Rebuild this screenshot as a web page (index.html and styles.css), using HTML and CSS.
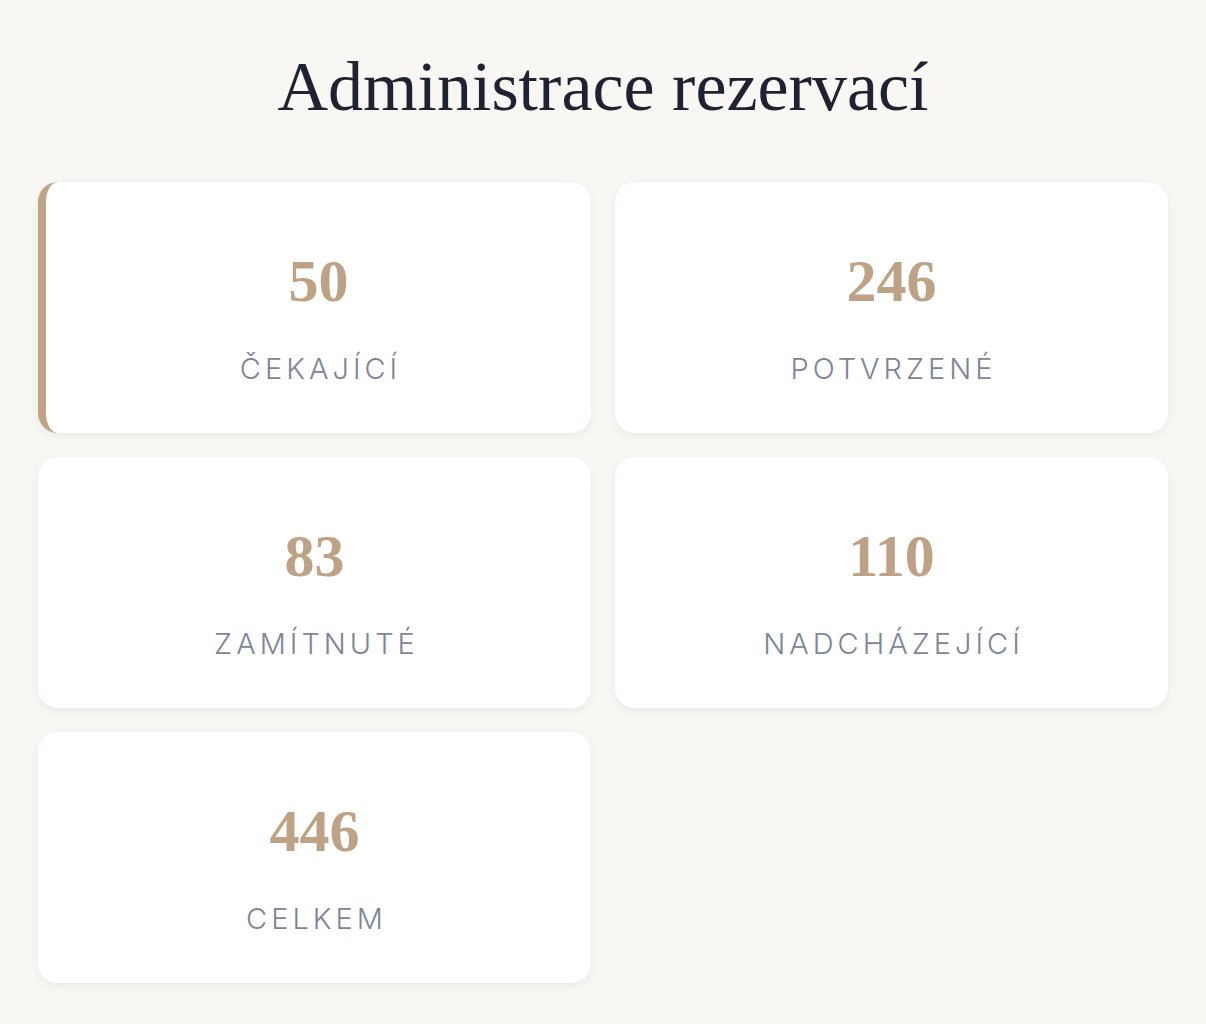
FILE: index.html
```html
<!DOCTYPE html>
<html lang="cs">
<head>
<meta charset="utf-8">
<title>Administrace rezervací</title>
<link rel="stylesheet" href="styles.css">
</head>
<body>
<main class="page">
  <h1 class="title">Administrace rezervací</h1>
  <div class="grid">
    <div class="card card-active"><div class="num">50</div><div class="label">Čekající</div></div>
    <div class="card"><div class="num">246</div><div class="label">Potvrzené</div></div>
    <div class="card"><div class="num">83</div><div class="label">Zamítnuté</div></div>
    <div class="card"><div class="num">110</div><div class="label">Nadcházející</div></div>
    <div class="card"><div class="num">446</div><div class="label">Celkem</div></div>
  </div>
</main>
</body>
</html>
```
FILE: styles.css
```css
html, body {
  margin: 0;
  padding: 0;
  background: #f8f7f4;
}
.page {
  padding: 49px 38px 40px;
}
.title {
  margin: 0 0 57px;
  text-align: center;
  font-family: "Liberation Serif", serif;
  font-weight: 400;
  font-size: 70px;
  line-height: 76px;
  color: #1f2230;
}
.grid {
  display: grid;
  grid-template-columns: 1fr 1fr;
  gap: 24px;
}
.card {
  height: 251px;
  box-sizing: border-box;
  background: #ffffff;
  border-radius: 20px;
  box-shadow: 0 3px 10px rgba(60, 50, 30, 0.07);
  display: flex;
  flex-direction: column;
  align-items: center;
  justify-content: center;
  gap: 42px;
  padding-top: 21px;
}
.card-active {
  border-left: 8px solid #bfa385;
}
.num {
  font-family: "Liberation Serif", serif;
  font-weight: 700;
  font-size: 60px;
  line-height: 60px;
  color: #bda285;
}
.label {
  font-family: "Inter", "Noto Sans", sans-serif;
  font-weight: 300;
  font-size: 29px;
  line-height: 32px;
  letter-spacing: 4px;
  text-indent: 4px;
  text-transform: uppercase;
  color: #7e8599;
}
```
